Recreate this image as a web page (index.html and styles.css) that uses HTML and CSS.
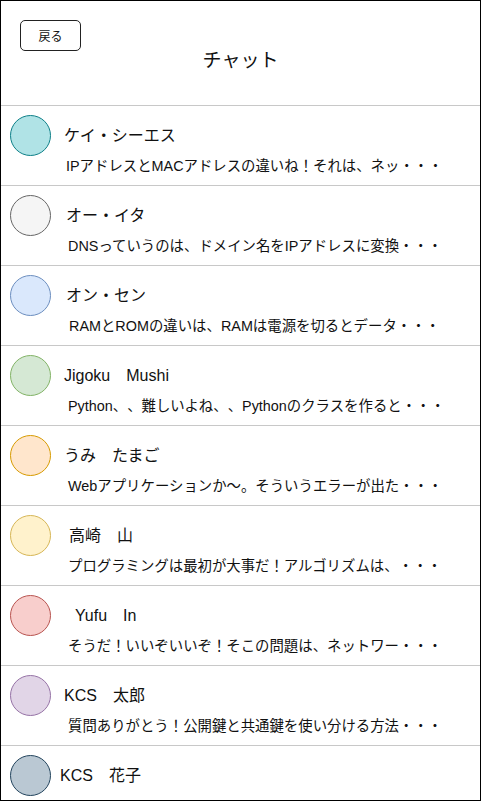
FILE: index.html
```html
<!DOCTYPE html>
<html lang="ja">
<head>
<meta charset="utf-8">
<title>チャット</title>
<link rel="stylesheet" href="styles.css">
</head>
<body>
<div class="screen">
  <header class="header">
    <button class="back">戻る</button>
    <h1 class="title">チャット</h1>
  </header>
  <ul class="list">
    <li class="row">
      <span class="avatar teal"></span>
      <div class="texts">
        <div class="name">ケイ・シーエス</div>
        <div class="msg">IPアドレスとMACアドレスの違いね！それは、ネッ・・・</div>
      </div>
    </li>
    <li class="row">
      <span class="avatar gray"></span>
      <div class="texts shift2">
        <div class="name">オー・イタ</div>
        <div class="msg">DNSっていうのは、ドメイン名をIPアドレスに変換・・・</div>
      </div>
    </li>
    <li class="row">
      <span class="avatar blue"></span>
      <div class="texts shift2">
        <div class="name">オン・セン</div>
        <div class="msg msg-shift">RAMとROMの違いは、RAMは電源を切るとデータ・・・</div>
      </div>
    </li>
    <li class="row">
      <span class="avatar green"></span>
      <div class="texts">
        <div class="name">Jigoku　Mushi</div>
        <div class="msg msg-shift">Python、、難しいよね、、Pythonのクラスを作ると・・・</div>
      </div>
    </li>
    <li class="row">
      <span class="avatar orange"></span>
      <div class="texts">
        <div class="name">うみ　たまご</div>
        <div class="msg msg-shift">Webアプリケーションか〜。そういうエラーが出た・・・</div>
      </div>
    </li>
    <li class="row">
      <span class="avatar yellow"></span>
      <div class="texts">
        <div class="name name-shift">高崎　山</div>
        <div class="msg msg-shift">プログラミングは最初が大事だ！アルゴリズムは、・・・</div>
      </div>
    </li>
    <li class="row">
      <span class="avatar red"></span>
      <div class="texts">
        <div class="name name-yufu">Yufu　In</div>
        <div class="msg msg-shift">そうだ！いいぞいいぞ！そこの問題は、ネットワー・・・</div>
      </div>
    </li>
    <li class="row">
      <span class="avatar purple"></span>
      <div class="texts">
        <div class="name">KCS　太郎</div>
        <div class="msg msg-shift">質問ありがとう！公開鍵と共通鍵を使い分ける方法・・・</div>
      </div>
    </li>
    <li class="row last">
      <span class="avatar slate"></span>
      <div class="texts">
        <div class="name name-left">KCS　花子</div>
      </div>
    </li>
  </ul>
</div>
</body>
</html>
```
FILE: styles.css
```css
* { box-sizing: border-box; }
html, body { margin: 0; padding: 0; background: #fff; }
body {
  font-family: "Liberation Sans", "Noto Sans CJK JP", sans-serif;
  color: #111;
  text-spacing-trim: space-all;
}
.screen {
  width: 481px;
  height: 801px;
  border: 1px solid #000;
  overflow: hidden;
}
.header {
  height: 104px;
  padding: 19px 19px 0;
  display: flex;
  flex-direction: column;
  align-items: flex-start;
}
.back {
  width: 61px;
  height: 31px;
  border: 1px solid #222;
  border-radius: 5px;
  background: #fff;
  font-family: "Liberation Sans", "Noto Sans CJK JP", sans-serif;
  font-size: 12px;
  color: #111;
  padding: 0;
}
.title {
  align-self: center;
  margin: 0;
  font-size: 19px;
  line-height: 20px;
  font-weight: normal;
  margin-left: 0;
}
.list {
  list-style: none;
  margin: 0;
  padding: 0;
}
.row {
  height: 80px;
  border-top: 1px solid #c8c8c8;
  padding: 9px 9px;
  display: flex;
  align-items: flex-start;
}
.avatar {
  flex: none;
  width: 41px;
  height: 41px;
  border-radius: 50%;
  border: 1px solid;
}
.teal { background: #b0e3e6; border-color: #0e8088; }
.gray { background: #f5f5f5; border-color: #666666; }
.blue { background: #dae8fc; border-color: #6c8ebf; }
.green { background: #d5e8d4; border-color: #82b366; }
.orange { background: #ffe6cc; border-color: #d79b00; }
.yellow { background: #fff2cc; border-color: #d6b656; }
.red { background: #f8cecc; border-color: #b85450; }
.purple { background: #e1d5e7; border-color: #9673a6; }
.slate { background: #bac8d3; border-color: #23445d; }
.texts {
  margin-left: 13px;
  padding-top: 11px;
}
.shift2 { margin-left: 15px; }
.name {
  font-size: 16px;
  line-height: 20px;
  white-space: nowrap;
}
.msg {
  margin-top: 10px;
  margin-left: 2px;
  font-size: 14.4px;
  line-height: 20px;
  white-space: nowrap;
}
.msg-shift { margin-left: 4px; }
.shift2 .msg-shift { margin-left: 3px; }
.name-shift { margin-left: 5px; }
.name-yufu { margin-left: 11px; }
.name-left { margin-left: -4px; }
```
